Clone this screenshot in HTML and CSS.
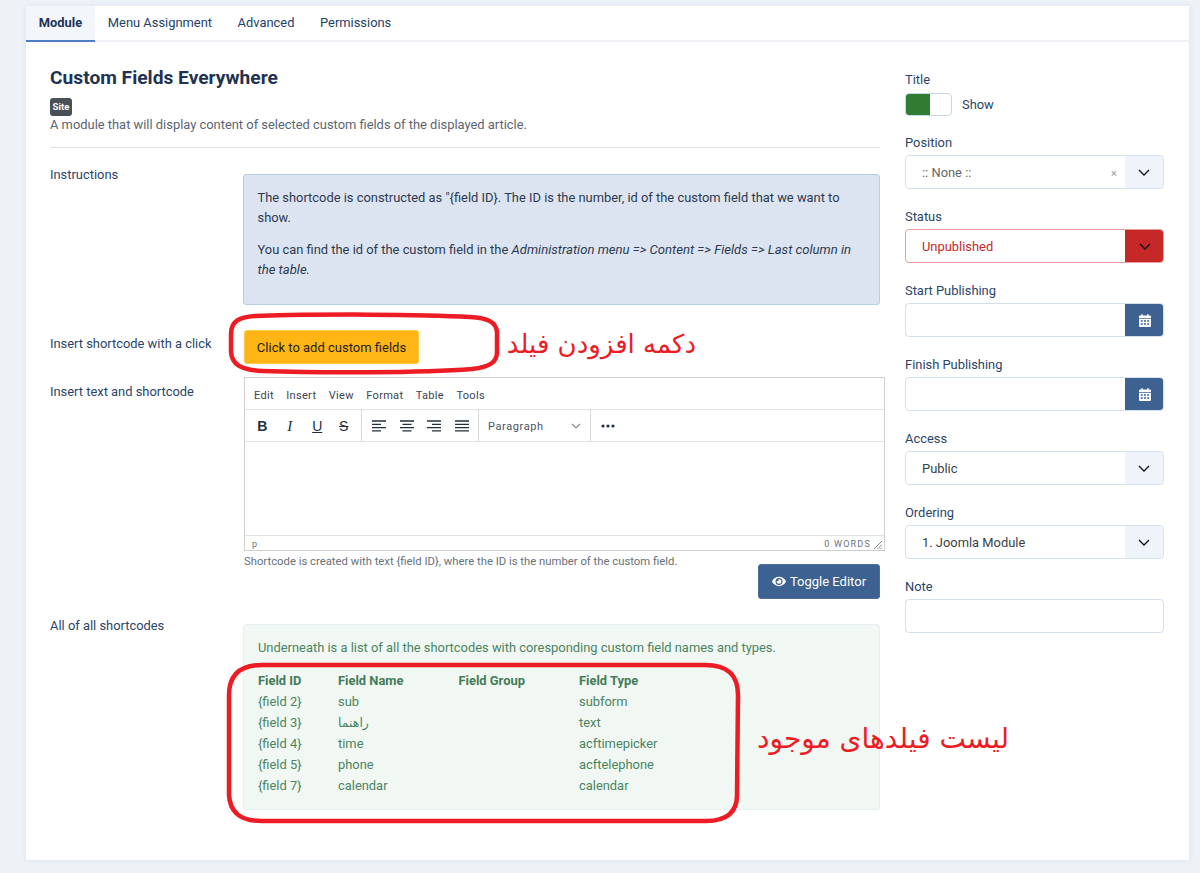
FILE: index.html
```html
<!DOCTYPE html>
<html lang="en">
<head>
<meta charset="utf-8">
<title>Custom Fields Everywhere</title>
<link rel="stylesheet" href="styles.css">
</head>
<body>
<div class="card">
  <nav class="tabs">
    <a class="tab active">Module</a>
    <a class="tab">Menu Assignment</a>
    <a class="tab">Advanced</a>
    <a class="tab">Permissions</a>
  </nav>
  <div class="content">
    <main class="main">
      <h1 class="title">Custom Fields Everywhere</h1>
      <span class="badge">Site</span>
      <p class="desc">A module that will display content of selected custom fields of the displayed article.</p>
      <hr class="rule">
      <div class="row row-instr">
        <div class="row-label">Instructions</div>
        <div class="info">
          <p>The shortcode is constructed as "{field ID}. The ID is the number, id of the custom field that we want to show.</p>
          <p>You can find the id of the custom field in the <em>Administration menu =&gt; Content =&gt; Fields =&gt; Last column in the table.</em></p>
        </div>
      </div>
      <div class="row row-btn">
        <div class="row-label">Insert shortcode with a click</div>
        <button class="btn-add">Click to add custom fields</button>
      </div>
      <div class="row row-editor">
        <div class="row-label">Insert text and shortcode</div>
        <div class="editor-col">
          <div class="editor">
            <div class="menubar">
              <span>Edit</span><span>Insert</span><span>View</span><span>Format</span><span>Table</span><span>Tools</span>
            </div>
            <div class="toolbar">
              <div class="tgroup tg-text">
                <span class="ti ti-b">B</span><span class="ti ti-i">I</span><span class="ti ti-u">U</span><span class="ti ti-s">S</span>
              </div>
              <div class="tgroup tg-align">
                <svg class="ai" viewBox="0 0 14 12"><path d="M0 1h14M0 4.300h9M0 7.600h14M0 10.900h9"/></svg>
                <svg class="ai" viewBox="0 0 14 12"><path d="M0 1h14M2.500 4.300h9M0 7.600h14M2.500 10.900h9"/></svg>
                <svg class="ai" viewBox="0 0 14 12"><path d="M0 1h14M5 4.300h9M0 7.600h14M5 10.900h9"/></svg>
                <svg class="ai" viewBox="0 0 14 12"><path d="M0 1h14M0 4.300h14M0 7.600h14M0 10.900h14"/></svg>
              </div>
              <div class="tgroup tg-para">
                <span class="para-text">Paragraph</span>
                <svg class="para-chev" viewBox="0 0 10 6"><path d="M1 1l4 4 4-4"/></svg>
              </div>
              <div class="tgroup tg-more">
                <svg class="dots" viewBox="0 0 14 4"><circle cx="2" cy="2" r="1.600"/><circle cx="7" cy="2" r="1.600"/><circle cx="12" cy="2" r="1.600"/></svg>
              </div>
            </div>
            <div class="edit-area"></div>
            <div class="statusbar">
              <span>p</span>
              <span class="words">0 WORDS</span>
              <svg class="grip" viewBox="0 0 8 8"><path d="M8 0L0 8M8 3.500L3.500 8M8 6.500L6.500 8"/></svg>
            </div>
          </div>
          <div class="help">Shortcode is created with text {field ID}, where the ID is the number of the custom field.</div>
          <div class="toggle-wrap">
            <button class="btn-toggle">
              <svg class="eye" viewBox="0 0 576 512"><path d="M572.500 241.400C518.300 135.600 410.900 64 288 64S57.700 135.600 3.500 241.400a32.400 32.400 0 0 0 0 29.200C57.700 376.400 165.100 448 288 448s230.300-71.600 284.500-177.400a32.400 32.400 0 0 0 0-29.200zM288 400a144 144 0 1 1 144-144 143.900 143.900 0 0 1-144 144zm0-240a95.300 95.300 0 0 0-25.300 3.800 47.900 47.900 0 0 1-66.900 66.900A95.800 95.800 0 1 0 288 160z"/></svg>
              Toggle Editor
            </button>
          </div>
        </div>
      </div>
      <div class="row row-list">
        <div class="row-label">All of all shortcodes</div>
        <div class="success">
          <p>Underneath is a list of all the shortcodes with coresponding custom field names and types.</p>
          <table class="fields">
            <thead>
              <tr><th class="c1">Field ID</th><th class="c2">Field Name</th><th class="c3">Field Group</th><th>Field Type</th></tr>
            </thead>
            <tbody>
              <tr><td>{field 2}</td><td>sub</td><td></td><td>subform</td></tr>
              <tr><td>{field 3}</td><td><span class="fa" lang="fa" dir="rtl">راهنما</span></td><td></td><td>text</td></tr>
              <tr><td>{field 4}</td><td>time</td><td></td><td>acftimepicker</td></tr>
              <tr><td>{field 5}</td><td>phone</td><td></td><td>acftelephone</td></tr>
              <tr><td>{field 7}</td><td>calendar</td><td></td><td>calendar</td></tr>
            </tbody>
          </table>
        </div>
      </div>
    </main>
    <aside class="side">
      <div class="field field-title">
        <label class="flabel">Title</label>
        <div class="switch-row">
          <span class="switch"><span class="switch-on"></span></span>
          <span class="switch-text">Show</span>
        </div>
      </div>
      <div class="field">
        <label class="flabel">Position</label>
        <div class="control">
          <span class="value muted">:: None ::</span>
          <span class="clear">×</span>
          <span class="addon"><svg class="chev" viewBox="0 0 12 7"><path d="M1 1l5 5 5-5"/></svg></span>
        </div>
      </div>
      <div class="field">
        <label class="flabel">Status</label>
        <div class="control danger">
          <span class="value">Unpublished</span>
          <span class="addon"><svg class="chev" viewBox="0 0 12 7"><path d="M1 1l5 5 5-5"/></svg></span>
        </div>
      </div>
      <div class="field">
        <label class="flabel">Start Publishing</label>
        <div class="control">
          <span class="value"></span>
          <span class="cal"><svg class="cal-icon" viewBox="0 0 12 13"><path fill-rule="evenodd" d="M2.500 0h1.200v1.500h4.600V0h1.200v1.500H11a1 1 0 0 1 1 1V4H0V2.500a1 1 0 0 1 1-1h1.500zM0 4.800h12V12a1 1 0 0 1-1 1H1a1 1 0 0 1-1-1zM1.800 6.300v1.500h2V6.300zm3.200 0v1.500h2V6.300zm3.200 0v1.500h2V6.300zM1.800 9.300v1.500h2V9.300zm3.200 0v1.500h2V9.300zm3.200 0v1.500h2V9.300z"/></svg></span>
        </div>
      </div>
      <div class="field">
        <label class="flabel">Finish Publishing</label>
        <div class="control">
          <span class="value"></span>
          <span class="cal"><svg class="cal-icon" viewBox="0 0 12 13"><path fill-rule="evenodd" d="M2.500 0h1.200v1.500h4.600V0h1.200v1.500H11a1 1 0 0 1 1 1V4H0V2.500a1 1 0 0 1 1-1h1.500zM0 4.800h12V12a1 1 0 0 1-1 1H1a1 1 0 0 1-1-1zM1.800 6.300v1.500h2V6.300zm3.200 0v1.500h2V6.300zm3.200 0v1.500h2V6.300zM1.800 9.300v1.500h2V9.300zm3.200 0v1.500h2V9.300zm3.200 0v1.500h2V9.300z"/></svg></span>
        </div>
      </div>
      <div class="field">
        <label class="flabel">Access</label>
        <div class="control">
          <span class="value">Public</span>
          <span class="addon"><svg class="chev" viewBox="0 0 12 7"><path d="M1 1l5 5 5-5"/></svg></span>
        </div>
      </div>
      <div class="field">
        <label class="flabel">Ordering</label>
        <div class="control">
          <span class="value">1. Joomla Module</span>
          <span class="addon"><svg class="chev" viewBox="0 0 12 7"><path d="M1 1l5 5 5-5"/></svg></span>
        </div>
      </div>
      <div class="field">
        <label class="flabel">Note</label>
        <div class="control"><span class="value"></span></div>
      </div>
    </aside>
  </div>
</div>
<svg class="marks" viewBox="0 0 1200 873">
  <path d="M255 316C320 314 420 314 470 317C488 318 496 322 497 332L497 352C497 362 490 367 472 369C420 373 320 373 262 371C240 370 232 364 231 352L231 334C231 322 238 317 255 316Z"/>
  <path d="M262 665L705 665C728 665 738 675 738 695L737 795C737 812 727 821 706 821L262 821C240 821 230 812 229 795L229 695C229 675 240 665 262 665Z"/>
</svg>
<div class="note note-btn" lang="fa" dir="rtl">دکمه افزودن فیلد</div>
<div class="note note-list" lang="fa" dir="rtl">لیست فیلدهای موجود</div>
</body>
</html>
```
FILE: styles.css
```css
* { box-sizing: border-box; }
html, body { margin: 0; height: 873px; overflow: hidden; }
body {
  background: #edf2f7;
  font-family: Roboto, "Liberation Sans", sans-serif;
  font-size: 12.9px;
  color: #22395a;
  padding: 6px 11px 13px 26px;
  position: relative;
}
.card {
  background: #fff;
  height: 854px;
  box-shadow: 0 0 6px rgba(40, 70, 110, .08);
}
.tabs {
  display: flex;
  height: 36px;
  border-bottom: 2px solid #eef2f7;
}
.tab {
  padding: 0 12.800px;
  height: 36px;
  line-height: 33px;
  color: #234068;
}
.tab.active {
  background: #f3f6fa;
  font-weight: 700;
  border-bottom: 2px solid #4a7fc5;
  color: #1c3459;
}
.content {
  display: flex;
  padding: 0 25px 0 24px;
}
.main { width: 830px; flex: none; }
.title {
  margin: 24px 0 0;
  font-size: 19.2px;
  line-height: 23px;
  font-weight: 700;
  color: #1f3350;
}
.badge {
  display: block;
  width: 22px;
  height: 18px;
  margin-top: 9px;
  background: #495057;
  border-radius: 3px;
  color: #fff;
  font-size: 9.600px;
  font-weight: 700;
  line-height: 18px;
  text-align: center;
}
.desc {
  margin: 0;
  line-height: 18px;
  color: #5a6470;
}
.rule {
  margin: 13px 0 0;
  border: 0;
  border-top: 1px solid #dfe3e7;
}
.row { display: flex; }
.row-label { width: 193px; flex: none; line-height: 18px; color: #2a4468; }
.row-instr { margin-top: 26px; height: 130px; }
.row-instr .row-label { margin-top: -8px; }
.info {
  width: 637px;
  height: 131px;
  background: #dde4f1;
  border: 1px solid #b8cde6;
  border-radius: 3px;
  padding: 13px 13.500px;
  line-height: 20px;
  color: #2c3a50;
}
.info p { margin: 0 0 12px; }
.info em { font-size: 13.100px; }
.row-btn { margin-top: 26px; height: 34px; }
.row-btn .row-label { margin-top: 5px; }
.btn-add {
  margin-left: 1px;
  width: 175px;
  height: 34px;
  background: #ffb514;
  border: 1px solid #ffc94d;
  border-radius: 3px;
  font: 13px Roboto, sans-serif;
  color: #1e1e1e;
  padding: 0;
}
.row-editor { margin-top: 13px; }
.row-editor .row-label { margin-top: 6px; }
.editor-col { width: 637px; }
.editor {
  margin-left: 1px;
  width: 641px;
  height: 174px;
  border: 1px solid #cfcfcf;
  display: flex;
  flex-direction: column;
  color: #222f3e;
}
.menubar {
  height: 31px;
  display: flex;
  align-items: center;
  gap: 12.500px;
  padding: 3px 9px 0;
  font-size: 11px;
  letter-spacing: .3px;
  color: #3b4450;
  flex: none;
}
.toolbar {
  height: 33px;
  display: flex;
  border-top: 1px solid #e3e3e3;
  border-bottom: 1px solid #e3e3e3;
  flex: none;
}
.tgroup {
  display: flex;
  align-items: center;
  border-right: 1px solid #d9d9d9;
  height: 100%;
}
.tg-text { width: 117px; padding-left: 3.500px; gap: 0; }
.ti {
  width: 27.500px;
  text-align: center;
  font-size: 14px;
  line-height: 16px;
  color: #222f3e;
}
.ti-b { font-family: "Liberation Sans", sans-serif; font-weight: 700; }
.ti-i { font-family: "Liberation Serif", serif; font-style: italic; font-size: 15px; }
.ti-u { font-family: "Liberation Sans", sans-serif; text-decoration: underline; }
.ti-s { font-family: "Liberation Sans", sans-serif; text-decoration: line-through; margin-left: -1px; }
.tg-align { width: 117px; padding-left: 10px; gap: 13.500px; }
.ai { width: 14px; height: 12px; flex: none; }
.ai path { stroke: #222f3e; stroke-width: 1.300; fill: none; }
.tg-para {
  width: 112px;
  padding: 0 9px;
  justify-content: space-between;
  font-size: 11px;
  letter-spacing: .6px;
  color: #4a5360;
}
.para-text { padding-top: 1px; }
.para-chev { width: 10px; height: 6px; }
.para-chev path { fill: none; stroke: #8a8f96; stroke-width: 1.200; }
.tg-more { border-right: 0; padding-left: 10px; }
.dots { width: 14px; height: 4px; fill: #222f3e; }
.edit-area { flex: 1; }
.statusbar {
  height: 15px;
  flex: none;
  border-top: 1px solid #e3e3e3;
  display: flex;
  align-items: center;
  padding: 2px 2px 0 7px;
  font-size: 9px;
  letter-spacing: 1.200px;
  color: #6a7280;
}
.words { margin-left: auto; margin-right: 3px; }
.grip { width: 8px; height: 8px; margin-top: 2px; }
.grip path { stroke: #777; stroke-width: .9; fill: none; }
.help {
  font-size: 11.300px;
  line-height: 14px;
  margin-top: 4px;
  margin-left: 1px;
  color: #687078;
}
.toggle-wrap { display: flex; justify-content: flex-end; margin-top: -5px; }
.btn-toggle {
  width: 122px;
  height: 35px;
  background: #3d6291;
  border: 1px solid #4b6f9c;
  border-radius: 3px;
  color: #fff;
  font: 13px Roboto, sans-serif;
  padding: 0;
  display: flex;
  align-items: center;
  justify-content: center;
  gap: 4px;
}
.eye { width: 14px; height: 13px; fill: #fff; }
.row-list { margin-top: 25px; }
.row-list .row-label { margin-top: -7px; }
.success {
  width: 637px;
  height: 186px;
  background: #f1f7f3;
  border: 1px solid #e8eff3;
  border-radius: 3px;
  padding: 14px 14px;
  color: #4a8460;
}
.success p { margin: 0; line-height: 18px; }
.fields {
  border-collapse: collapse;
  margin-top: 13px;
}
.fields th, .fields td {
  padding: 0;
  height: 21px;
  text-align: left;
  font-size: 12.9px;
  color: #4a8460;
}
.fields th { font-weight: 700; color: #437d58; }
.c1 { width: 80px; }
.c2 { width: 120.500px; }
.c3 { width: 120.500px; }
.fa { font-family: "DejaVu Sans", sans-serif; font-size: 12.500px; }
.side { width: 259px; flex: none; margin-left: 25px; padding-top: 29px; }
.field { height: 74px; }
.field-title { height: 63px; }
.flabel {
  display: block;
  height: 21px;
  line-height: 17px;
  color: #2a4468;
}
.switch-row { display: flex; align-items: center; gap: 10px; margin-top: -3px; height: 30px; }
.switch {
  width: 47px;
  height: 23px;
  border: 1px solid #c7d6e4;
  border-radius: 4px;
  background: #fff;
  overflow: hidden;
  display: block;
}
.switch-on { display: block; width: 24px; height: 100%; background: #2f7d32; }
.switch-text { color: #2a4468; }
.control {
  height: 34px;
  display: flex;
  align-items: stretch;
  border: 1px solid #d5e0ee;
  border-radius: 4px;
  background: #fff;
  overflow: hidden;
}
.value {
  flex: 1;
  padding-left: 16px;
  line-height: 33px;
  color: #3a3f45;
}
.value.muted { color: #666; }
.clear {
  width: 14px;
  font-size: 11px;
  line-height: 36px;
  color: #999;
}
.addon {
  width: 38px;
  background: #eff3fa;
  display: flex;
  align-items: center;
  justify-content: center;
}
.chev { width: 12px; height: 7px; }
.chev path { fill: none; stroke: #111; stroke-width: 1.300; }
.danger { border-color: #e99a9c; }
.danger .value { color: #c52827; }
.danger .addon { background: #c52827; margin: -1px -1px -1px 0; width: 39px; }
.cal {
  width: 39px;
  margin: -1px -1px -1px 0;
  background: #3d6291;
  display: flex;
  align-items: center;
  justify-content: center;
}
.cal-icon { width: 12px; height: 13px; fill: #fff; }
.marks {
  position: absolute;
  left: 0;
  top: 0;
  width: 1200px;
  height: 873px;
  pointer-events: none;
}
.marks path { fill: none; stroke: #ed1c24; stroke-width: 4.500; }
.note {
  position: absolute;
  font-family: "DejaVu Sans", "Noto Sans", sans-serif;
  color: #ed1c24;
  white-space: nowrap;
  line-height: 30px;
}
.note-btn { left: 507px; top: 329px; width: 189px; font-size: 26px; text-align: center; }
.note-list { left: 758px; top: 724px; width: 251px; font-size: 28px; text-align: center; }
```
